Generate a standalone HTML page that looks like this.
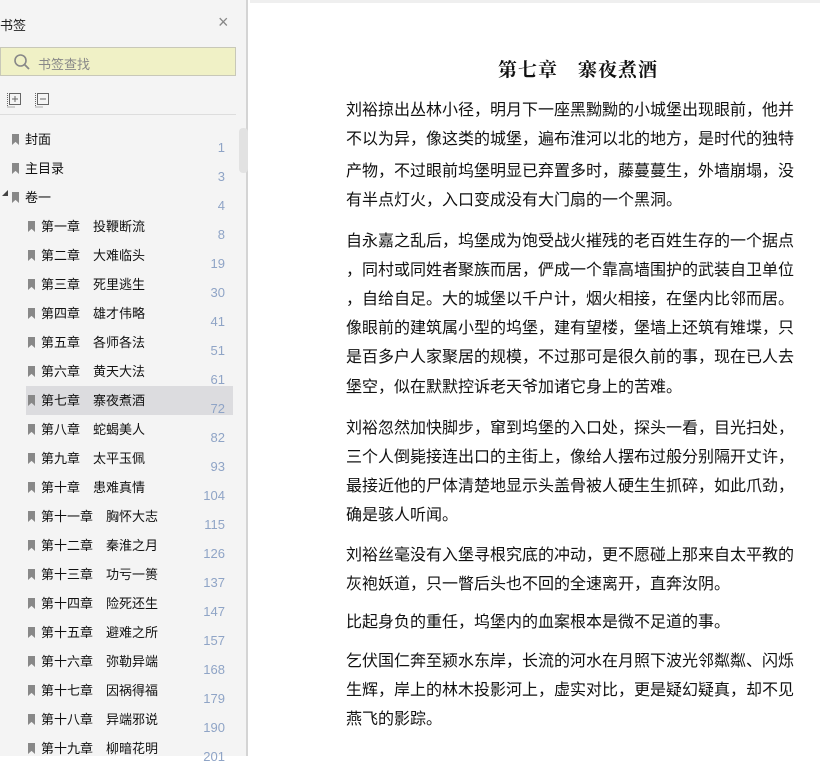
<!DOCTYPE html>
<html><head><meta charset="utf-8"><style>
*{margin:0;padding:0;box-sizing:border-box}
body{width:820px;height:756px;overflow:hidden;background:#fff;font-family:"Liberation Sans","Noto Sans CJK SC",sans-serif;position:relative}
#side{position:absolute;left:0;top:0;width:248px;height:756px;background:#f4f4f4;border-right:2px solid #d4d4d4}
.topline{position:absolute;left:0;top:0;width:820px;height:3px;background:#efefef}
.t{position:absolute;font-size:13px;color:#222;white-space:nowrap}
.row{position:absolute;height:29px;font-size:13px;color:#111;white-space:nowrap}
.bm{position:absolute;top:8px;width:7px;height:11px;background:#888;clip-path:polygon(0 0,100% 0,100% 100%,50% 72%,0 100%)}
.num{position:absolute;right:0;top:14px;font-size:13px;color:#8fa4c6;text-align:right}
#main{position:absolute;left:346px;top:0;width:460px;font-size:16px;color:#111;font-family:"Liberation Sans","Noto Sans CJK SC",sans-serif}
.l{position:absolute;left:0;white-space:nowrap;line-height:20px}
</style></head><body>
<div id="side">
<div class="t" style="left:0;top:15px;font-size:13px">书签</div>
<div style="position:absolute;left:218px;top:14px;color:#888;font-size:18px;line-height:16px">×</div>
<div style="position:absolute;left:0;top:47px;width:236px;height:29px;background:#f0f1c6;border:1px solid #c8c8b8"></div>
<svg style="position:absolute;left:13px;top:53px" width="18" height="18"><circle cx="7.5" cy="7.5" r="5.5" fill="none" stroke="#888" stroke-width="1.6"/><line x1="11.5" y1="11.5" x2="16" y2="16" stroke="#888" stroke-width="1.8"/></svg>
<div class="t" style="left:38px;top:54px;color:#888">书签查找</div>
<svg style="position:absolute;left:7px;top:92px" width="45" height="16"><g fill="none" stroke="#666" stroke-width="1"><rect x="2.5" y="1.5" width="11" height="11"/><path d="M5 7h6M8 4v6" /><path d="M0.5 1v14h8" stroke-dasharray="1 1"/><rect x="30.5" y="1.5" width="11" height="11"/><path d="M33 7h6"/><path d="M28.5 1v14h8" stroke-dasharray="1 1"/></g></svg>
<div style="position:absolute;left:0;top:114px;width:236px;height:1px;background:#ddd"></div>
<div style="position:absolute;left:239px;top:128px;width:9px;height:45px;background:#e2e2e2;border-radius:4px"></div>
<div style="position:absolute;left:26px;top:386px;width:207px;height:29px;background:#dcdcdf"></div>
<div id="rows"></div>
</div>
<div class="topline" style="left:250px;width:570px"></div>
<div id="main">
<div class="l" style="left:152px;top:61px;font-size:19px;letter-spacing:1px;font-weight:bold;font-family:'Liberation Serif','Noto Serif CJK SC',serif">第七章　寨夜煮酒</div>
</div>
<script>
var rows=[["封面",1,0],["主目录",3,0],["卷一",4,0],["第一章　投鞭断流",8,1],["第二章　大难临头",19,1],["第三章　死里逃生",30,1],["第四章　雄才伟略",41,1],["第五章　各师各法",51,1],["第六章　黄天大法",61,1],["第七章　寨夜煮酒",72,1],["第八章　蛇蝎美人",82,1],["第九章　太平玉佩",93,1],["第十章　患难真情",104,1],["第十一章　胸怀大志",115,1],["第十二章　秦淮之月",126,1],["第十三章　功亏一篑",137,1],["第十四章　险死还生",147,1],["第十五章　避难之所",157,1],["第十六章　弥勒异端",168,1],["第十七章　因祸得福",179,1],["第十八章　异端邪说",190,1],["第十九章　柳暗花明",201,1]];
var h="";rows.forEach(function(r,i){var y=126+i*29;var x=r[2]?28:12;
h+='<div class="row" style="left:0;top:'+y+'px;width:225px"><div class="bm" style="left:'+x+'px"></div><div style="position:absolute;left:'+(x+13)+'px;top:3px">'+r[0]+'</div><div class="num">'+r[1]+'</div></div>';});
h+='<div style="position:absolute;left:2px;top:190px;width:0;height:0;border-left:6px solid transparent;border-bottom:6px solid #444"></div>';
document.getElementById("rows").innerHTML=h;
var L=[[101,"刘裕掠出丛林小径，明月下一座黑黝黝的小城堡出现眼前，他并"],[130,"不以为异，像这类的城堡，遍布淮河以北的地方，是时代的独特"],[162,"产物，不过眼前坞堡明显已弃置多时，藤蔓蔓生，外墙崩塌，没"],[191,"有半点灯火，入口变成没有大门扇的一个黑洞。"],
[232,"自永嘉之乱后，坞堡成为饱受战火摧残的老百姓生存的一个据点"],[261,"，同村或同姓者聚族而居，俨成一个靠高墙围护的武装自卫单位"],[290,"，自给自足。大的城堡以千户计，烟火相接，在堡内比邻而居。"],[319,"像眼前的建筑属小型的坞堡，建有望楼，堡墙上还筑有雉堞，只"],[348,"是百多户人家聚居的规模，不过那可是很久前的事，现在已人去"],[378,"堡空，似在默默控诉老天爷加诸它身上的苦难。"],
[419,"刘裕忽然加快脚步，窜到坞堡的入口处，探头一看，目光扫处，"],[448,"三个人倒毙接连出口的主街上，像给人摆布过般分别隔开丈许，"],[477,"最接近他的尸体清楚地显示头盖骨被人硬生生抓碎，如此爪劲，"],[506,"确是骇人听闻。"],
[546,"刘裕丝毫没有入堡寻根究底的冲动，更不愿碰上那来自太平教的"],[575,"灰袍妖道，只一瞥后头也不回的全速离开，直奔汝阴。"],
[613,"比起身负的重任，坞堡内的血案根本是微不足道的事。"],
[652,"乞伏国仁奔至颍水东岸，长流的河水在月照下波光邻粼粼、闪烁"],[681,"生辉，岸上的林木投影河上，虚实对比，更是疑幻疑真，却不见"],[710,"燕飞的影踪。"]];
var m="";L.forEach(function(a){m+='<div class="l" style="top:'+a[0]+'px">'+a[1]+'</div>';});
document.getElementById("main").insertAdjacentHTML("beforeend",m);
</script>
</body></html>
